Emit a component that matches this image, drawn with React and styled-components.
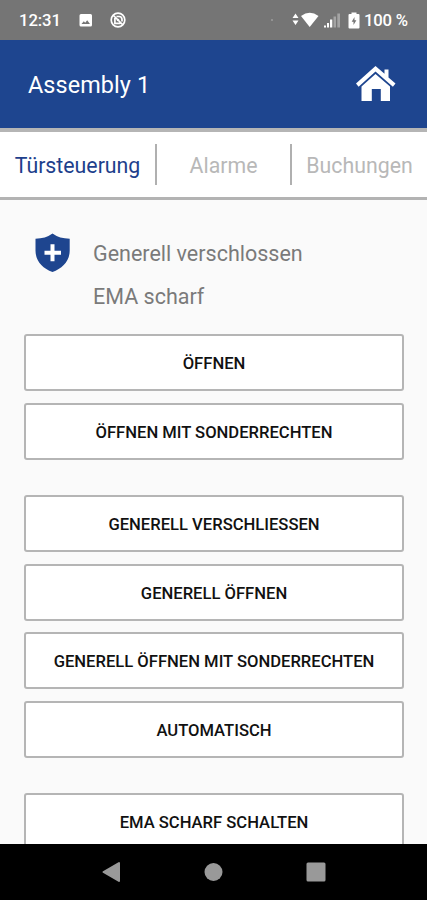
import React, { Component } from 'react';
import styled, { createGlobalStyle } from 'styled-components';

const GlobalStyle = createGlobalStyle`
  * {
    box-sizing: border-box;
  }

  body {
    margin: 0;
    background-color: #fafafa;
    font-family: Roboto, "Liberation Sans", sans-serif;
  }
`

const Screen = styled.div`
  display: flex;
  flex-direction: column;
  width: 427px;
  height: 900px;
  overflow: hidden;
  background-color: #fafafa;
`

const StatusBar = styled.div`
  display: flex;
  align-items: center;
  flex: none;
  height: 40px;
  padding: 2px 18px 0 19px;
  background-color: #757575;
  color: #fff;
  font-size: 16.7px;
  font-weight: 500;
  line-height: 20px;

  svg {
    display: block;
    flex: none;
  }
`

const Clock = styled.span`
  width: 60px;
  letter-spacing: -0.1px;
`

const StatusIcons = styled.div`
  display: flex;
  align-items: center;
  flex: 1;
`

const Battery = styled.span`
  width: 45px;
  margin-left: 4px;
  letter-spacing: -0.2px;
  white-space: nowrap;
`

const Header = styled.header`
  display: flex;
  align-items: center;
  justify-content: space-between;
  flex: none;
  height: 88px;
  padding: 0 31px 0 28px;
  background-color: #1e458f;

  .App-title {
    margin: 2px 0 0;
    color: #fff;
    font-size: 23.4px;
    font-weight: 400;
    letter-spacing: 0.1px;
  }
`

const HomeButton = styled.button`
  width: 40px;
  height: 38px;
  padding: 0;
  border: 0;
  background: none;

  svg {
    display: block;
  }
`

const Tabs = styled.nav`
  display: grid;
  grid-template-columns: 155px 135px 137px;
  align-items: center;
  flex: none;
  height: 72px;
  border-top: 4px solid #b5b5b5;
  border-bottom: 3px solid #b3b3b3;
  background-color: #fff;
`

const Tab = styled.a`
  height: 41px;
  border-left: ${props => props.$first ? '0' : '2px solid #b0b0b0'};
  color: ${props => props.$active ? '#1e3f8c' : '#b8b8b8'};
  font-size: 21.3px;
  line-height: 43px;
  text-align: center;
`

const Content = styled.main`
  flex: 1;
  min-height: 0;
  padding: 30px 24px 0;
  overflow: hidden;
`

const Status = styled.section`
  display: flex;
  height: 104px;
  padding-left: 11px;

  svg {
    display: block;
    flex: none;
    margin: 3px 23px 0 0;
  }
`

const StatusText = styled.div`
  padding-top: 2px;
`

const StatusLine = styled.p`
  margin: 0;
  color: #7a7a7a;
  font-size: 21.5px;
  line-height: 43px;
`

const Group = styled.div`
  display: grid;
  gap: 11.7px;
  margin-bottom: 35.2px;
`

const ActionButton = styled.button`
  width: 380px;
  height: 57px;
  padding: 2px 0 0;
  border: 2px solid #b5b5b5;
  border-radius: 3px;
  background-color: #fff;
  color: #111;
  font-family: inherit;
  font-size: 16.6px;
  font-weight: 500;
  text-align: center;
`

const NavBar = styled.footer`
  display: flex;
  align-items: center;
  justify-content: center;
  gap: 83px;
  flex: none;
  height: 56px;
  background-color: #000;
`

const tabs = [
  { label: 'Türsteuerung', active: true },
  { label: 'Alarme' },
  { label: 'Buchungen' }
];

const groups = [
  ['ÖFFNEN', 'ÖFFNEN MIT SONDERRECHTEN'],
  ['GENERELL VERSCHLIESSEN', 'GENERELL ÖFFNEN', 'GENERELL ÖFFNEN MIT SONDERRECHTEN', 'AUTOMATISCH'],
  ['EMA SCHARF SCHALTEN']
];

const NotificationIcons = () => (
  <svg width="50" height="20" viewBox="0 0 50 20" fill="none">
    <path fill="#fff" fillRule="evenodd" d="M2 3h9.500a1.500 1.500 0 0 1 1.500 1.500v9.500a1.500 1.500 0 0 1-1.500 1.500H2a1.500 1.500 0 0 1-1.500-1.500V4.500A1.500 1.500 0 0 1 2 3ZM2.500 13h8.500L8.200 9.300 6.200 11.800 4.800 10.200Z" />
    <circle cx="39" cy="9" r="6.800" stroke="#fff" strokeWidth="1.700" />
    <path stroke="#fff" strokeWidth="1.700" d="M34 4l10 10M35.900 7v5.300h5.500M37.500 5.500h2.500a3 3 0 0 1 3 3v2" />
    <circle cx="39" cy="9" r="1.300" fill="#fff" />
  </svg>
)

const SignalIcons = () => (
  <svg width="90" height="20" viewBox="0 0 90 20">
    <circle cx="2" cy="9" r="0.800" fill="#bbb" />
    <path fill="#fff" d="M25.500 2.500l3 4.500h-6zM22.500 9.500h6l-3 4.500z" />
    <path fill="#fff" d="M31 5Q39.700-1.300 48.500 5L39.700 16z" />
    <path fill="#fff" d="M54 14.500h2v2h-2zM57 12h2v4.500h-2zM60 8.500h2.300v8H60z" />
    <path fill="#a4a4a4" d="M63.500 5.500H66v11h-2.500zM67.300 2.500H70v14h-2.700z" />
    <path fill="#fff" fillRule="evenodd" d="M81.500 1.500h5V3h2a1 1 0 0 1 1 1v12.500a1 1 0 0 1-1 1h-9a1 1 0 0 1-1-1V4a1 1 0 0 1 1-1h2zM84.500 6L81.700 10.700h1.800v3.300l2.900-4.700h-1.900z" />
  </svg>
)

const HomeIcon = () => (
  <svg width="40" height="38" viewBox="0 0 40 38" fill="#fff">
    <path d="M19.500 1L28.500 8.800V4.500h4v8L39.500 18.500l-2.600 3.200L19.500 6.600 2.600 21.700 0 18.500z" />
    <path d="M19.500 9L34 21.500V36h-9.200V24h-9v12H5.500V21.500z" />
  </svg>
)

const ShieldIcon = () => (
  <svg width="35" height="40" viewBox="0 0 35 40">
    <path fill="#1e458f" d="M17.500 0.500Q24.500 5.700 34.700 5.700V17.500C34.700 28 27.500 35.500 17.500 39C7.500 35.500 0.500 28 0.500 17.500V5.700Q10.500 5.700 17.500 0.500Z" />
    <path stroke="#fff" strokeWidth="4" d="M17.500 11.300v17M9.500 19.800h16.500" />
  </svg>
)

class App extends Component {

  render() {
    return (
      <Screen>
        <GlobalStyle />
        <StatusBar>
          <Clock>12:31</Clock>
          <StatusIcons><NotificationIcons /></StatusIcons>
          <SignalIcons />
          <Battery>100 %</Battery>
        </StatusBar>
        <Header>
          <h1 className="App-title">Assembly 1</h1>
          <HomeButton aria-label="Home"><HomeIcon /></HomeButton>
        </Header>
        <Tabs>
          {tabs.map((tab, i) => (
            <Tab key={tab.label} $first={i === 0} $active={tab.active}>{tab.label}</Tab>
          ))}
        </Tabs>
        <Content>
          <Status>
            <ShieldIcon />
            <StatusText>
              <StatusLine>Generell verschlossen</StatusLine>
              <StatusLine>EMA scharf</StatusLine>
            </StatusText>
          </Status>
          {groups.map((labels, i) => (
            <Group key={i}>
              {labels.map(label => <ActionButton key={label}>{label}</ActionButton>)}
            </Group>
          ))}
        </Content>
        <NavBar>
          <svg width="19" height="22" viewBox="0 0 19 22"><path fill="#999" stroke="#999" strokeWidth="2" strokeLinejoin="round" d="M17 2v18L1.500 11z" /></svg>
          <svg width="19" height="20" viewBox="0 0 19 20"><circle cx="9.500" cy="10" r="9" fill="#999" /></svg>
          <svg width="20" height="20" viewBox="0 0 20 20"><rect x="0.500" y="0.500" width="19" height="19" rx="1.500" fill="#999" /></svg>
        </NavBar>
      </Screen>
    );
  }
}

export default App;
